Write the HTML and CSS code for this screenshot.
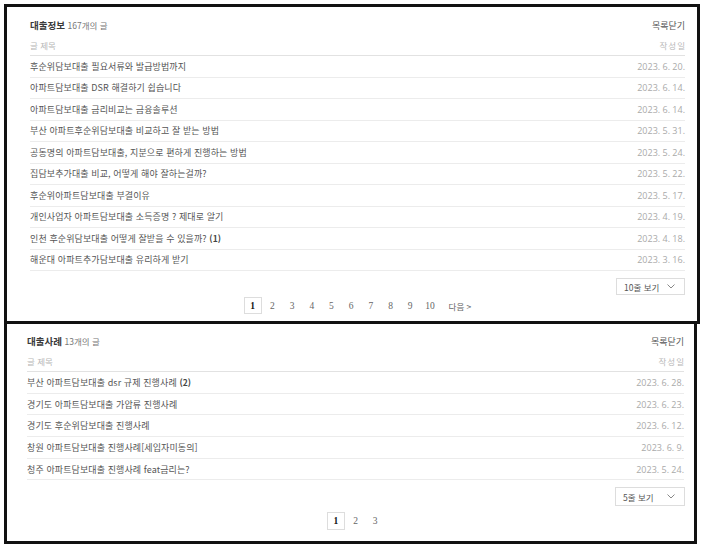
FILE: index.html
```html
<!DOCTYPE html>
<html lang="ko">
<head>
<meta charset="utf-8">
<link rel="stylesheet" href="styles.css">
</head>
<body>
<section class="board board-top">
  <div class="board-title">
    <div><strong class="name">대출정보</strong> <span class="count">167개의 글</span></div>
    <span class="close">목록닫기</span>
  </div>
  <div class="list-head"><span>글 제목</span><span class="head-date">작성일</span></div>
  <ul class="rows rows-top">
    <li><span>후순위담보대출 필요서류와 발급방법까지</span><span class="date">2023. 6. 20.</span></li>
    <li><span>아파트담보대출 DSR 해결하기 쉽습니다</span><span class="date">2023. 6. 14.</span></li>
    <li><span>아파트담보대출 금리비교는 금융솔루션</span><span class="date">2023. 6. 14.</span></li>
    <li><span>부산 아파트후순위담보대출 비교하고 잘 받는 방법</span><span class="date">2023. 5. 31.</span></li>
    <li><span>공동명의 아파트담보대출, 지분으로 편하게 진행하는 방법</span><span class="date">2023. 5. 24.</span></li>
    <li><span>집담보추가대출 비교, 어떻게 해야 잘하는걸까?</span><span class="date">2023. 5. 22.</span></li>
    <li><span>후순위아파트담보대출 부결이유</span><span class="date">2023. 5. 17.</span></li>
    <li><span>개인사업자 아파트담보대출 소득증명 ? 제대로 알기</span><span class="date">2023. 4. 19.</span></li>
    <li><span>인천 후순위담보대출 어떻게 잘받을 수 있을까? <b class="cmt">(1)</b></span><span class="date">2023. 4. 18.</span></li>
    <li><span>해운대 아파트추가담보대출 유리하게 받기</span><span class="date">2023. 3. 16.</span></li>
  </ul>
  <div class="tools tools-top">
    <div class="select"><span>10줄 보기</span><svg class="chev" width="8" height="5" viewBox="0 0 8 5"><path d="M0.5 0.5 L4 4 L7.5 0.5" fill="none" stroke="#888" stroke-width="1"/></svg></div>
  </div>
  <nav class="pager pager-top">
    <span class="pg on">1</span><span class="pg">2</span><span class="pg">3</span><span class="pg">4</span><span class="pg">5</span><span class="pg">6</span><span class="pg">7</span><span class="pg">8</span><span class="pg">9</span><span class="pg">10</span><span class="next">다음 &gt;</span>
  </nav>
</section>
<section class="board board-bottom">
  <div class="board-title">
    <div><strong class="name">대출사례</strong> <span class="count">13개의 글</span></div>
    <span class="close">목록닫기</span>
  </div>
  <div class="list-head"><span>글 제목</span><span class="head-date">작성일</span></div>
  <ul class="rows rows-bottom">
    <li><span>부산 아파트담보대출 dsr 규제 진행사례 <b class="cmt">(2)</b></span><span class="date">2023. 6. 28.</span></li>
    <li><span>경기도 아파트담보대출 가압류 진행사례</span><span class="date">2023. 6. 23.</span></li>
    <li><span>경기도 후순위담보대출 진행사례</span><span class="date">2023. 6. 12.</span></li>
    <li><span>창원 아파트담보대출 진행사례[세입자미동의]</span><span class="date">2023. 6. 9.</span></li>
    <li><span>청주 아파트담보대출 진행사례 feat금리는?</span><span class="date">2023. 5. 24.</span></li>
  </ul>
  <div class="tools tools-bottom">
    <div class="select"><span>5줄 보기</span><svg class="chev" width="8" height="5" viewBox="0 0 8 5"><path d="M0.5 0.5 L4 4 L7.5 0.5" fill="none" stroke="#888" stroke-width="1"/></svg></div>
  </div>
  <nav class="pager pager-bottom">
    <span class="pg on">1</span><span class="pg">2</span><span class="pg">3</span>
  </nav>
</section>
</body>
</html>
```

FILE: styles.css
```css
* { box-sizing: border-box; }
html, body { margin: 0; padding: 0; background: #fff; }
body {
  font-family: "Noto Sans CJK KR", "Noto Sans", sans-serif;
  font-size: 9px;
  color: #555;
  padding: 4px 0 0 4px;
}
.board {
  border: 3px solid #111;
  display: flex;
  flex-direction: column;
}
.board-top {
  width: 696px;
  height: 320px;
  padding: 7px 12px 0 23px;
}
.board-bottom {
  width: 693px;
  height: 223px;
  margin-top: -3px;
  padding: 6px 10px 0 20px;
}
.board-title {
  height: 22px;
  display: flex;
  justify-content: space-between;
  align-items: center;
}
.name { font-weight: 700; font-size: 9.5px; color: #3a3a3a; }
.count { font-size: 8.5px; color: #777; }
.close { font-size: 9px; color: #555; }
.list-head {
  height: 20px;
  display: flex;
  justify-content: space-between;
  align-items: center;
  border-bottom: 1px solid #e2e2e2;
  color: #b8b8b8;
  font-size: 8.5px;
  padding-bottom: 1px;
}
.head-date { letter-spacing: 1px; margin-right: -1px; }
.rows { list-style: none; margin: 0; padding: 0; }
.rows li {
  display: flex;
  justify-content: space-between;
  align-items: center;
  border-bottom: 1px solid #ececec;
  color: #555;
  letter-spacing: 0.1px;
}
.rows-top li { height: 21.5px; }
.rows-bottom li { height: 21.7px; }
.cmt { font-weight: 700; color: #444; font-size: 8.5px; }
.date { color: #aaa; font-size: 9px; font-family: "Open Sans", "Noto Sans", sans-serif; letter-spacing: 0; }
.tools { display: flex; justify-content: flex-end; }
.tools-top { margin-top: 7px; }
.tools-bottom { margin-top: 7px; margin-right: -1px; }
.select {
  border: 1px solid #ddd;
  width: 69px;
  display: flex;
  align-items: center;
  justify-content: space-between;
  padding: 0 9px 0 7px;
  color: #555;
  font-size: 8.5px;
}
.tools-top .select { height: 17px; width: 69px; }
.tools-bottom .select { height: 19px; width: 70px; }
.pager {
  display: flex;
  justify-content: center;
  align-items: center;
  gap: 1.7px;
}
.pager-top { margin-top: 2px; }
.pager-bottom { margin-top: 6px; }
.pg {
  width: 18px;
  height: 17px;
  display: flex;
  align-items: center;
  justify-content: center;
  color: #666;
  font-family: "Liberation Serif", serif;
  font-size: 9.5px;
}
.pager-bottom .pg { height: 18px; }
.pg.on { border: 1px solid #ddd; color: #111; font-weight: 700; }
.next { margin-left: 8px; color: #666; font-size: 8.5px; }
```
